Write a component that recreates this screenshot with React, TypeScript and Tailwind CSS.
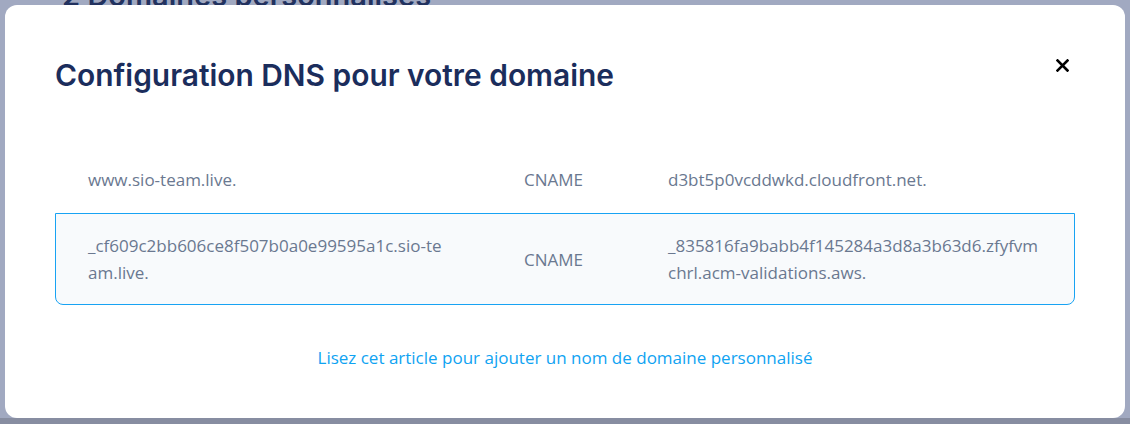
import React from "react";

export default function App() {
  const body = { fontFamily: "'Open Sans', sans-serif" };
  return (
    <div className="relative w-[1130px] h-[424px] overflow-hidden bg-[#a1a9c1]">
      <div
        className="absolute left-[62px] top-[-26px] text-[29px] font-semibold text-[#22325f]"
        style={{ fontFamily: "Inter, sans-serif" }}
      >
        2 Domaines personnalisés
      </div>
      <div className="absolute left-0 right-0 bottom-0 h-[6px] bg-[#878da1]" />
      <div className="relative mx-[5px] mt-[5px] h-[413px] rounded-[12px] bg-white pl-[50px] pr-[50px] pt-[52px]">
        <button className="absolute right-[56px] top-[54px] w-[13px] h-[13px]">
          <svg viewBox="0 0 13 13" width="13" height="13">
            <path d="M1.5 1.5 L11.5 11.5 M11.5 1.5 L1.5 11.5" stroke="#000" strokeWidth="2.6" strokeLinecap="square" />
          </svg>
        </button>
        <h2
          className="text-[29.9px] leading-[36px] font-semibold text-[#1b2d5c]"
          style={{ fontFamily: "Inter, sans-serif" }}
        >
          Configuration DNS pour votre domaine
        </h2>
        <div className="mt-[53px] text-[17px] leading-[27px] text-[#6a7890]" style={body}>
          <div className="grid grid-cols-[436px_144px_1fr] items-center px-8 py-[19px] border border-transparent">
            <div className="break-all">www.sio-team.live.</div>
            <div>CNAME</div>
            <div className="break-all">d3bt5p0vcddwkd.cloudfront.net.</div>
          </div>
          <div className="grid grid-cols-[436px_144px_1fr] items-center px-8 py-[18px] border border-[#18a3f3] rounded-b-[8px] bg-[#f8fafc]">
            <div className="break-all pr-[74px]">_cf609c2bb606ce8f507b0a0e99595a1c.sio-team.live.</div>
            <div>CNAME</div>
            <div className="break-all">_835816fa9babb4f145284a3d8a3b63d6.zfyfvmchrl.acm-validations.aws.</div>
          </div>
        </div>
        <div className="mt-[41px] text-center text-[17px] leading-[24px] text-[#0fa3f2]" style={body}>
          Lisez cet article pour ajouter un nom de domaine personnalisé
        </div>
      </div>
    </div>
  );
}
